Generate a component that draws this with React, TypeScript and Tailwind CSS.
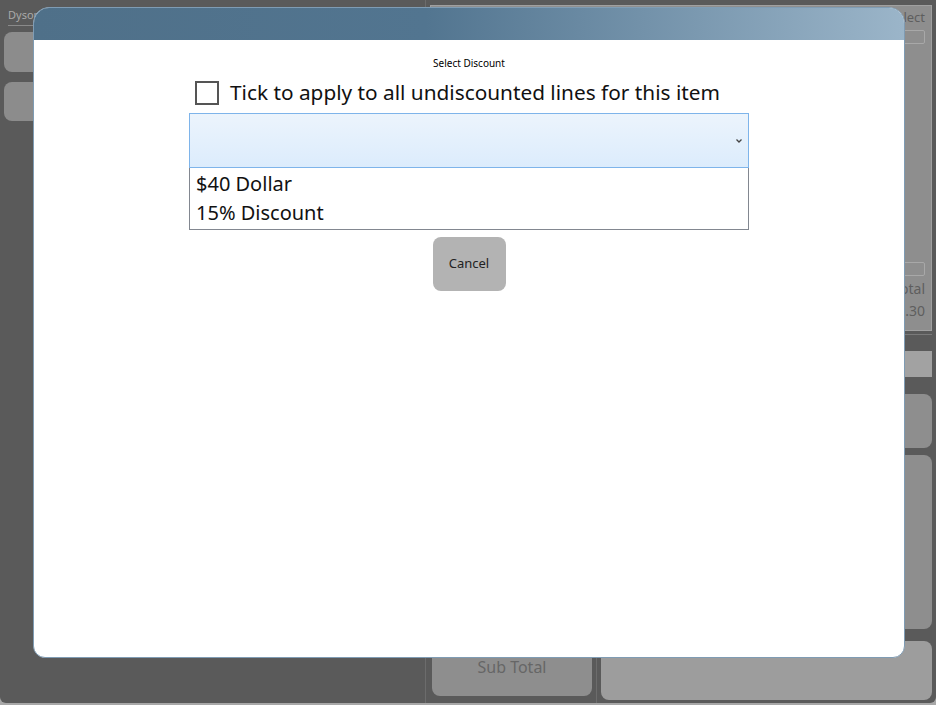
import React from "react";

export default function App() {
  return (
    <div
      className="relative w-[936px] h-[705px] overflow-hidden bg-[#a8a8a8]"
      style={{ fontFamily: '"Noto Sans", "Open Sans", sans-serif' }}
    >
      {/* background app window */}
      <div className="flex w-[936px] h-[703px] bg-[#5a5a5a] rounded-b-[6px] overflow-hidden">
        {/* left column */}
        <div className="w-[425px] flex flex-col pt-[8px] px-[4px]">
          <div className="text-[11px] leading-[14px] text-[#a9a9a9] pl-[4px]">Dyson</div>
          <div className="h-px bg-[#8a8a8a] mt-[3px] mx-[4px]" />
          <div className="mt-[6px] h-[40px] rounded-[8px] bg-[#8c8c8c] w-[120px]" />
          <div className="mt-[10px] h-[39px] rounded-[8px] bg-[#8c8c8c] w-[120px]" />
        </div>
        <div className="w-px bg-[#6c6c6c]" />
        {/* right area */}
        <div className="flex-1 flex flex-col pt-[5px] pr-[4px] pl-[4px]">
          <div className="h-[326px] bg-[#8e8e8e] border border-[#a0a0a0] flex flex-col items-end pr-[6px]">
            <div className="text-[13px] text-[#5e5e5e] mt-[2px]">Select</div>
            <div className="mt-[2px] w-[24px] h-[14px] border border-[#a8a8a8] rounded-[2px]" />
            <div className="flex-1" />
            <div className="w-[24px] h-[14px] border border-[#a8a8a8] rounded-[2px]" />
            <div className="text-[14px] text-[#5e5e5e] leading-[22px] mt-[2px]">Total</div>
            <div className="text-[14px] text-[#5e5e5e] leading-[22px]">0.30</div>
            <div className="h-[8px]" />
          </div>
          <div className="h-px bg-[#7a7a7a] mt-[3px]" />
          <div className="flex flex-1 mt-[0px]">
            <div className="w-[164px] flex flex-col justify-end pb-[7px] pt-[8px]">
              <div className="h-[53px] rounded-[8px] bg-[#8e8e8e] text-[16px] text-[#666] flex justify-center pt-[12px] mx-[2px]">
                Sub Total
              </div>
            </div>
            <div className="w-px bg-[#6c6c6c] mx-[2px]" />
            <div className="flex-1 flex flex-col gap-[7px] pt-[16px] pb-[3px] pl-[2px] pr-[0px]">
              <div className="h-[26px] bg-[#a2a2a2]" />
              <div className="h-[54px] rounded-[8px] bg-[#8e8e8e] mt-[10px]" />
              <div className="h-[174px] rounded-[8px] bg-[#8e8e8e]" />
              <div className="flex-1 rounded-[8px] bg-[#9d9d9d] mt-[5px]" />
            </div>
          </div>
        </div>
      </div>

      {/* modal dialog */}
      <div className="absolute left-[33px] top-[7px] w-[872px] h-[651px] flex flex-col rounded-t-[16px] rounded-b-[12px] overflow-hidden border border-[#7f9cb4] bg-white">
        <div className="h-[32px] bg-gradient-to-r from-[#4f7089] via-[#527590] via-45% to-[#9bb5c9] shrink-0" />
        <div className="flex flex-col items-center pt-[16px]">
          <div className="text-[10px] leading-[14px] text-black">Select Discount</div>
          <div className="w-[560px] flex flex-col">
            <div className="flex items-center ml-[6px] mt-[9px] h-[27px]">
              <div className="w-[24px] h-[24px] border-2 border-[#555] bg-white" />
              <span className="ml-[11px] text-[20.8px] leading-[27px] text-[#111]">
                Tick to apply to all undiscounted lines for this item
              </span>
            </div>
            <div className="mt-[7px] h-[55px] border border-[#7eb4ea] bg-gradient-to-b from-[#ecf4fc] to-[#dcecfc] flex items-center justify-end pr-[5px]">
              <svg width="8" height="6" viewBox="0 0 8 6">
                <path d="M1.5 1.5 L4 4 L6.5 1.5" stroke="#444" strokeWidth="1.3" fill="none" />
              </svg>
            </div>
            <div className="h-[62px] border border-t-0 border-[#828790] bg-white flex flex-col pl-[6px] pt-[1px]">
              <div className="text-[20px] leading-[29px] text-[#111]">$40 Dollar</div>
              <div className="text-[20px] leading-[29px] text-[#111]">15% Discount</div>
            </div>
          </div>
          <div className="mt-[7px] w-[73px] h-[54px] rounded-[8px] bg-[#b3b3b3] flex items-center justify-center text-[13px] text-[#222]">
            Cancel
          </div>
        </div>
      </div>
    </div>
  );
}
